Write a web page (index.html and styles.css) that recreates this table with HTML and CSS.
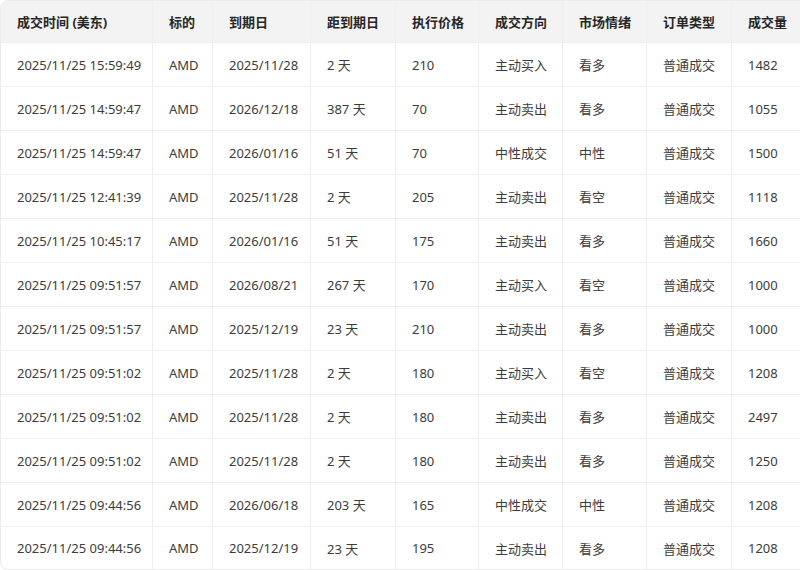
FILE: index.html
```html
<!DOCTYPE html>
<html lang="zh-CN">
<head>
<meta charset="utf-8">
<link rel="stylesheet" href="styles.css">
</head>
<body>
<div class="wrap">
<table class="trades">
<thead>
<tr>
<th class="c1">成交时间 (美东)</th><th class="c2">标的</th><th class="c3">到期日</th><th class="c4">距到期日</th><th class="c5">执行价格</th><th class="c6">成交方向</th><th class="c7">市场情绪</th><th class="c8">订单类型</th><th class="c9">成交量</th>
</tr>
</thead>
<tbody>
<tr><td>2025/11/25 15:59:49</td><td>AMD</td><td>2025/11/28</td><td>2 天</td><td>210</td><td>主动买入</td><td>看多</td><td>普通成交</td><td>1482</td></tr>
<tr><td>2025/11/25 14:59:47</td><td>AMD</td><td>2026/12/18</td><td>387 天</td><td>70</td><td>主动卖出</td><td>看多</td><td>普通成交</td><td>1055</td></tr>
<tr><td>2025/11/25 14:59:47</td><td>AMD</td><td>2026/01/16</td><td>51 天</td><td>70</td><td>中性成交</td><td>中性</td><td>普通成交</td><td>1500</td></tr>
<tr><td>2025/11/25 12:41:39</td><td>AMD</td><td>2025/11/28</td><td>2 天</td><td>205</td><td>主动卖出</td><td>看空</td><td>普通成交</td><td>1118</td></tr>
<tr><td>2025/11/25 10:45:17</td><td>AMD</td><td>2026/01/16</td><td>51 天</td><td>175</td><td>主动卖出</td><td>看多</td><td>普通成交</td><td>1660</td></tr>
<tr><td>2025/11/25 09:51:57</td><td>AMD</td><td>2026/08/21</td><td>267 天</td><td>170</td><td>主动买入</td><td>看空</td><td>普通成交</td><td>1000</td></tr>
<tr><td>2025/11/25 09:51:57</td><td>AMD</td><td>2025/12/19</td><td>23 天</td><td>210</td><td>主动卖出</td><td>看多</td><td>普通成交</td><td>1000</td></tr>
<tr><td>2025/11/25 09:51:02</td><td>AMD</td><td>2025/11/28</td><td>2 天</td><td>180</td><td>主动买入</td><td>看空</td><td>普通成交</td><td>1208</td></tr>
<tr><td>2025/11/25 09:51:02</td><td>AMD</td><td>2025/11/28</td><td>2 天</td><td>180</td><td>主动卖出</td><td>看多</td><td>普通成交</td><td>2497</td></tr>
<tr><td>2025/11/25 09:51:02</td><td>AMD</td><td>2025/11/28</td><td>2 天</td><td>180</td><td>主动卖出</td><td>看多</td><td>普通成交</td><td>1250</td></tr>
<tr><td>2025/11/25 09:44:56</td><td>AMD</td><td>2026/06/18</td><td>203 天</td><td>165</td><td>中性成交</td><td>中性</td><td>普通成交</td><td>1208</td></tr>
<tr><td>2025/11/25 09:44:56</td><td>AMD</td><td>2025/12/19</td><td>23 天</td><td>195</td><td>主动卖出</td><td>看多</td><td>普通成交</td><td>1208</td></tr>
</tbody>
</table>
</div>
</body>
</html>
```
FILE: styles.css
```css
html, body {
  margin: 0;
  padding: 0;
  background: #ffffff;
}
body {
  width: 800px;
  height: 570px;
  overflow: hidden;
}
.wrap {
  width: 840px;
  border: 1px solid #ececec;
  border-radius: 8px;
  overflow: hidden;
  box-sizing: border-box;
}
.trades {
  table-layout: fixed;
  border-collapse: separate;
  border-spacing: 0;
  width: 840px;
  font-family: "Noto Sans", "Noto Sans CJK SC", sans-serif;
  font-size: 13px;
  color: #3c3c3c;
}
.trades th, .trades td {
  box-sizing: border-box;
  text-align: left;
  padding: 0 0 0 16px;
  border-right: 1px solid #efefef;
  border-bottom: 1px solid #efefef;
  white-space: nowrap;
  overflow: hidden;
}
.trades th {
  height: 42px;
  background: #f3f3f3;
  font-weight: 700;
  color: #262626;
}
.trades td {
  height: 44px;
  font-weight: 400;
}
.trades tbody tr:last-child td {
  height: 42px;
  border-bottom: none;
}
.c1 { width: 152px; }
.c2 { width: 60px; }
.c3 { width: 98px; }
.c4 { width: 85px; }
.c5 { width: 83px; }
.c6 { width: 84px; }
.c7 { width: 84px; }
.c8 { width: 85px; }
.c9 { width: 109px; }
```
